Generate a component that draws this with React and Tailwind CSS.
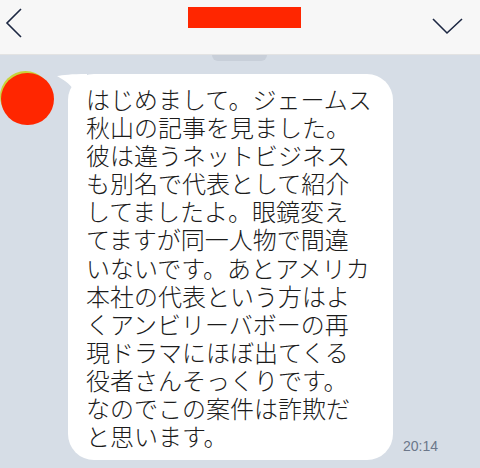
import React from "react";

const lines = [
  "はじめまして。ジェームス",
  "秋山の記事を見ました。",
  "彼は違うネットビジネス",
  "も別名で代表として紹介",
  "してましたよ。眼鏡変え",
  "てますが同一人物で間違",
  "いないです。あとアメリカ",
  "本社の代表という方はよ",
  "くアンビリーバボーの再",
  "現ドラマにほぼ出てくる",
  "役者さんそっくりです。",
  "なのでこの案件は詐欺だ",
  "と思います。",
];

export default function App() {
  return (
    <div
      className="w-[480px] h-[468px] overflow-hidden bg-[#d6dde6] flex flex-col"
      style={{ fontFamily: '"Noto Sans CJK JP", "Noto Sans", sans-serif' }}
    >
      <div className="h-[55px] shrink-0 bg-[#f7f7f7] border-b border-[#e3e3e3] flex items-center justify-between">
        <svg width="30" height="55" viewBox="0 0 30 55" className="shrink-0">
          <path d="M21 9 L7 23 L21 37" fill="none" stroke="#1c2742" strokeWidth="1.6" />
        </svg>
        <div className="w-[113px] h-[21px] bg-[#ff2600] self-start mt-[7px] ml-[158px]" />
        <div className="flex-1" />
        <svg width="48" height="55" viewBox="0 0 48 55" className="shrink-0">
          <path d="M1 19 L15 33 L30 19" fill="none" stroke="#1c2742" strokeWidth="1.6" />
        </svg>
      </div>
      <div className="flex justify-center">
        <div className="w-[55px] h-[6px] bg-[#c8cfd9] rounded-b-[6px] ml-[-2px]" />
      </div>
      <div className="flex items-end mt-[13px]">
        <div className="self-start shrink-0 relative w-[54px] h-[54px] mt-[-3px] ml-[0px]">
          <div className="absolute left-[0px] top-[0px] w-[51px] h-[51px] rounded-full bg-[#c9d33a]" />
          <div className="absolute left-[1px] top-[2px] w-[53px] h-[52px] rounded-full bg-[#ff2600]" />
        </div>
        <div className="relative ml-[14px] w-[325px] bg-white rounded-[26px] pl-[18px] pt-[11px] pb-[10px] text-[24px] leading-[28.1px] font-light text-[#1b1b1b]">
          <svg
            width="30"
            height="30"
            viewBox="0 0 30 30"
            className="absolute left-[-11px] top-[0px]"
          >
            <path d="M0 2 C6 1 14 0 30 0 L30 28 C22 26 16 12 8 7 C5 5 2 3 0 2 Z" fill="#ffffff" />
          </svg>
          {lines.map((l, i) => (
            <div key={i} className="whitespace-nowrap relative">
              {l}
            </div>
          ))}
        </div>
        <div className="ml-[10px] mb-[6px] text-[14px] leading-[16px] text-[#6c778a]" style={{ fontFamily: '"Liberation Sans", Arial, sans-serif' }}>
          20:14
        </div>
      </div>
    </div>
  );
}
